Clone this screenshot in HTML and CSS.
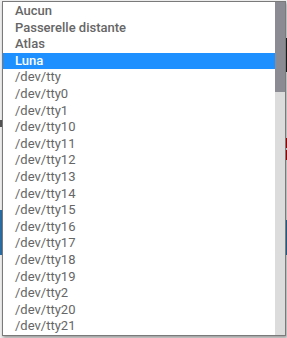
FILE: index.html
```html
<!DOCTYPE html>
<html lang="en">
<head>
    <meta charset="UTF-8">
    <meta name="viewport" content="width=device-width, initial-scale=1.0">
    <title>Port</title>
    <link rel="stylesheet" href="styles.css">
</head>
<body>
    <div class="page">
        <div class="edge left">
            <span class="mark dark-left"></span>
            <span class="mark blue-left"></span>
        </div>
        <div class="edge right">
            <span class="mark black"></span>
            <span class="mark red"></span>
            <span class="mark red2"></span>
            <span class="mark blue-right"></span>
        </div>
    </div>

    <div class="dropdown">
        <ul class="options">
            <li class="named">Aucun</li>
            <li class="named">Passerelle distante</li>
            <li class="named">Atlas</li>
            <li class="named selected">Luna</li>
            <li>/dev/tty</li>
            <li>/dev/tty0</li>
            <li>/dev/tty1</li>
            <li>/dev/tty10</li>
            <li>/dev/tty11</li>
            <li>/dev/tty12</li>
            <li>/dev/tty13</li>
            <li>/dev/tty14</li>
            <li>/dev/tty15</li>
            <li>/dev/tty16</li>
            <li>/dev/tty17</li>
            <li>/dev/tty18</li>
            <li>/dev/tty19</li>
            <li>/dev/tty2</li>
            <li>/dev/tty20</li>
            <li>/dev/tty21</li>
        </ul>
        <div class="scrollbar">
            <div class="thumb"></div>
        </div>
    </div>
</body>
</html>
```

FILE: styles.css
```css
html, body {
    margin: 0;
    height: 100%;
    overflow: hidden;
    background-color: #f0f0f0;
    font-family: Roboto, Arial, sans-serif;
}
.page {
    height: 100%;
    display: flex;
    justify-content: space-between;
}
.edge {
    width: 2px;
    display: flex;
    flex-direction: column;
}
.mark {
    display: block;
    width: 2px;
}
.dark-left {
    margin-top: 120px;
    height: 7px;
    background-color: #555;
}
.blue-left {
    margin-top: 83px;
    height: 45px;
    background-color: #2a6fa8;
}
.black {
    margin-top: 38px;
    height: 34px;
    background-color: #222;
}
.red {
    margin-top: 66px;
    height: 10px;
    background-color: #c00000;
}
.red2 {
    margin-top: 2px;
    height: 10px;
    background-color: #c00000;
}
.blue-right {
    margin-top: 60px;
    height: 35px;
    background-color: #2a6fa8;
}
.dropdown {
    position: absolute;
    left: 2px;
    top: 1px;
    width: 282px;
    height: 333px;
    border: 1px solid #7a7a7a;
    background-color: #fff;
    box-shadow: 1px 2px 3px rgba(0, 0, 0, 0.35);
    display: flex;
    overflow: hidden;
}
.options {
    flex: 1;
    list-style: none;
    margin: 0;
    padding: 1px 0 0 0;
    font-size: 13px;
    color: #666;
}
.options li {
    height: 16.6px;
    line-height: 16.6px;
    padding-left: 12px;
    white-space: nowrap;
}
.options .named {
    font-weight: 500;
}
.options .selected {
    background-color: #1e90ff;
    color: #fff;
}
.scrollbar {
    width: 10px;
    background-color: #dcdcdc;
}
.thumb {
    height: 90px;
    background-color: #8b8b94;
}
```
